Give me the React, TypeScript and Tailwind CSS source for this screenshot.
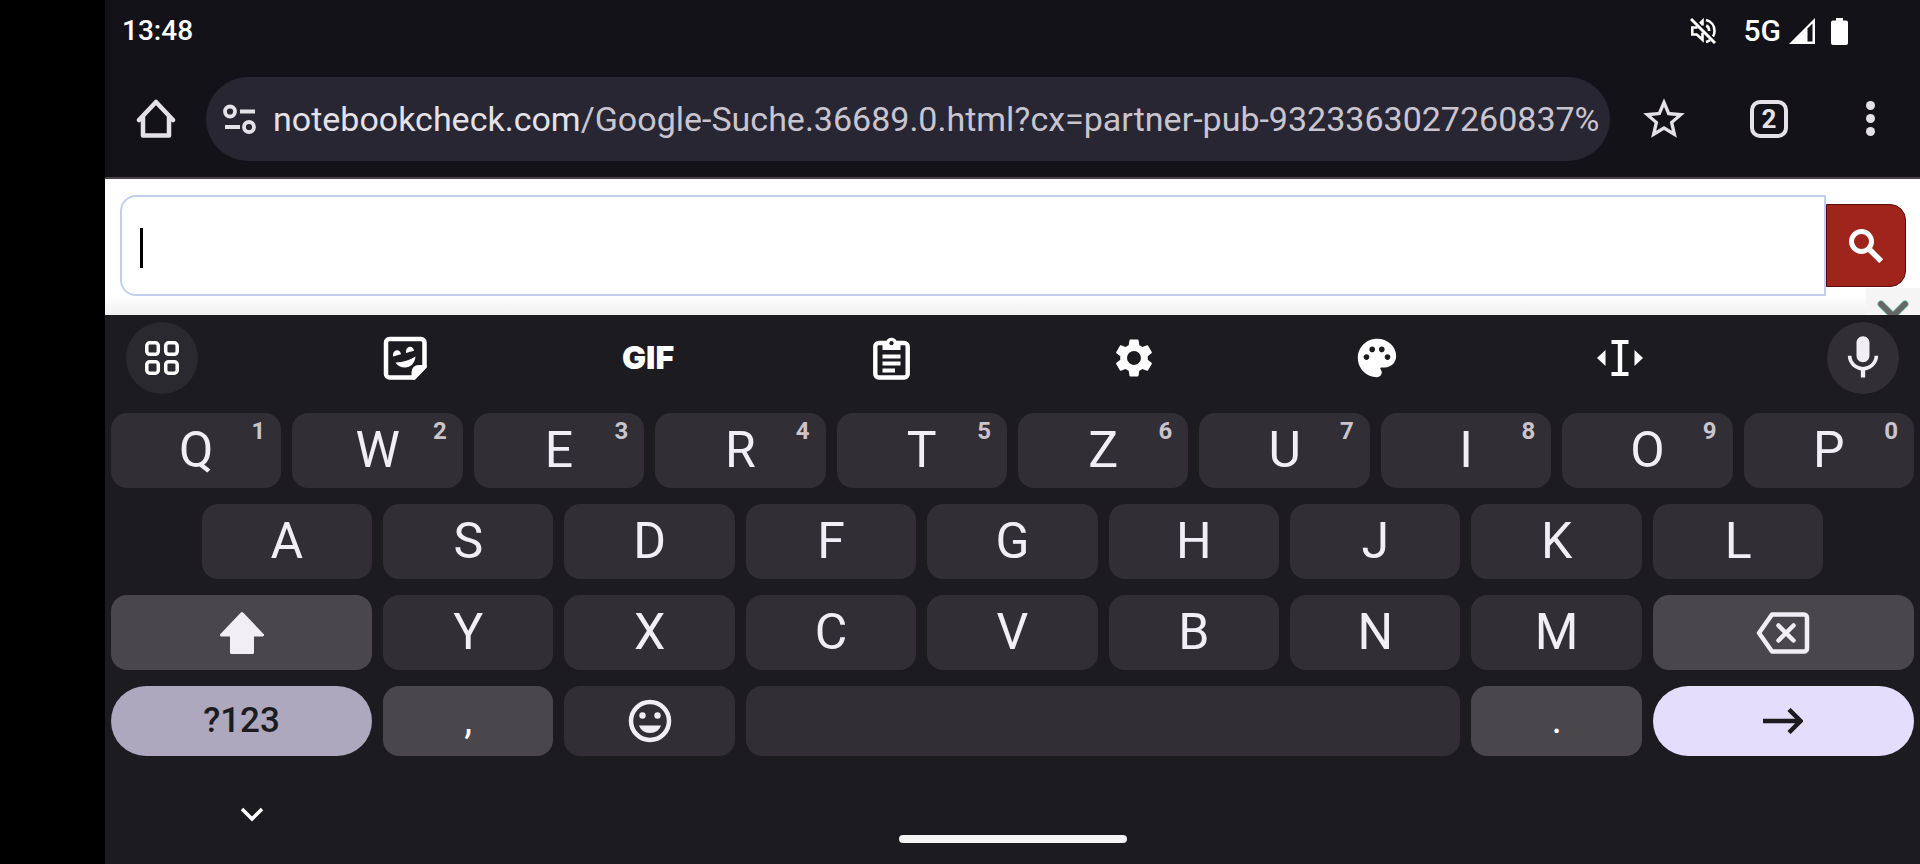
import React from 'react';
import { MdSettings, MdPalette, MdStarOutline, MdMic } from 'react-icons/md';

interface KeyProps {
  label: React.ReactNode;
  name?: string;
  hint?: string;
  span?: string;
  look?: string;
}

const numberRow = ['Q', 'W', 'E', 'R', 'T', 'Z', 'U', 'I', 'O', 'P'];
const homeRow = ['A', 'S', 'D', 'F', 'G', 'H', 'J', 'K', 'L'];
const bottomRow = ['Y', 'X', 'C', 'V', 'B', 'N', 'M'];

const LETTER = 'h-[75px] rounded-2xl bg-[#312e35] pb-0.5 text-[50px] text-[#f2eef6]';
const ACTION = 'h-[75px] rounded-2xl bg-[#49464c] text-[#f2eef6]';
const PUNCTUATION = 'h-[70px] rounded-2xl bg-[#49464c] pb-0.5 text-[40px] text-white';

const Key: React.FC<KeyProps> = ({ label, name, hint, span = 'col-span-2', look = LETTER }) => (
  <div className={`${span} pl-1.5 pr-[5px]`}>
    <button
      type="button"
      aria-label={name}
      className={`relative flex w-full items-center justify-center leading-none ${look}`}
    >
      {label}
      {hint && (
        <span className="absolute right-4 top-1.5 text-2xl leading-none font-bold text-[#c9c5cd]">{hint}</span>
      )}
    </button>
  </div>
);

const HomeIcon = () => (
  <svg width="40" height="40" viewBox="0 0 40 40" fill="none" stroke="#e5e1e9" strokeWidth="4.500" strokeLinejoin="round" strokeLinecap="round">
    <path d="M3 21 20 3l17 18" />
    <path d="M7 18v18.500h26V18" />
  </svg>
);

const TuneIcon = () => (
  <svg width="34" height="30" viewBox="0 0 34 30" fill="none" stroke="#e5e1e9" strokeWidth="3.800">
    <circle cx="7" cy="7.500" r="5" />
    <path d="M17 7.500h15M2 23h15" />
    <circle cx="26" cy="23" r="5" />
  </svg>
);

const MutedIcon = () => (
  <svg width="26" height="26" viewBox="0 0 26 26" fill="none" stroke="#fff" strokeWidth="2.600">
    <path d="M1 1l24 24" strokeWidth="3" />
    <path d="M7.500 9.500H2.300v7h4.500l5.700 5.300v-7" />
    <path d="M10 5.500l2.500-2.500v4.500" />
    <path d="M16 2c5 1.200 8.500 5.500 8.500 11 0 2-.5 4-1.500 5.500M16.200 7.500c2 1 3 3 3 5.500M16 24c1.500-.4 2.800-1 4-1.800" />
  </svg>
);

const SignalIcon = () => (
  <svg width="26" height="26" viewBox="0 0 26 26">
    <path d="M26 0v26H0z" fill="#fff" />
    <path d="M18.500 10.500l5-5v18h-5z" fill="#131218" />
  </svg>
);

const BatteryIcon = () => (
  <svg width="17" height="27" viewBox="0 0 17 27" fill="#fff">
    <path d="M5 0h7v2.500h3a2 2 0 0 1 2 2V25a2 2 0 0 1-2 2H2a2 2 0 0 1-2-2V4.500a2 2 0 0 1 2-2h3z" />
  </svg>
);

const SearchIcon = () => (
  <svg width="34" height="34" viewBox="0 0 34 34" fill="none" stroke="#fff" strokeWidth="5">
    <circle cx="12.500" cy="12.500" r="10" />
    <path d="M20 20l12.200 12.200" strokeWidth="5.500" />
  </svg>
);

const AppsIcon = () => (
  <svg width="34" height="34" viewBox="0 0 34 34" fill="none" stroke="#fff" strokeWidth="3.500">
    <rect x="1.800" y="1.800" width="11.500" height="11.500" rx="3" />
    <rect x="20.700" y="1.800" width="11.500" height="11.500" rx="3" />
    <rect x="1.800" y="20.700" width="11.500" height="11.500" rx="3" />
    <rect x="20.700" y="20.700" width="11.500" height="11.500" rx="3" />
  </svg>
);

const StickerIcon = () => (
  <svg width="44" height="44" viewBox="0 0 44 44">
    <path d="M6.500 3H38a3.500 3.500 0 0 1 3.500 3.500v24L31 41.500H6.500A3.500 3.500 0 0 1 3 38V6.500A3.500 3.500 0 0 1 6.500 3z" fill="none" stroke="#fff" strokeWidth="4.500" />
    <path d="M43.500 29v2L32 43.500h-3.500V36a7 7 0 0 1 7-7z" fill="#fff" />
    <path d="M10 20.500c-.3-3.500 1.200-6 4-6.200 2.400 0 3.700 1.700 4 4zM23 17c-.3-3.500 1.200-6 4-6.200 2.400 0 3.700 1.700 4 4z" fill="#fff" />
    <path d="M12.500 26.500c8-.3 14-2.200 20-6-.5 6.500-4.800 11-10.500 11-4.200 0-7.500-1.800-9.500-5z" fill="#fff" />
  </svg>
);

const ClipboardIcon = () => (
  <svg width="37" height="44" viewBox="0 0 37 44">
    <rect x="2.300" y="7" width="32.400" height="34.500" rx="3.500" fill="none" stroke="#fff" strokeWidth="4.400" />
    <path d="M9.500 5.500h3.800a5.500 5.500 0 0 1 10.400 0h3.800v8.500h-18z" fill="#fff" />
    <circle cx="18.500" cy="7.200" r="2.100" fill="#1c1b20" />
    <path d="M9.500 20.500h18M9.500 27.500h18M9.500 34.500h12.500" stroke="#fff" strokeWidth="4" />
  </svg>
);

const CursorIcon = () => (
  <svg width="46" height="36" viewBox="0 0 46 36" fill="#fff">
    <path d="M0 18l8.500-8v16zM46 18l-8.500-8v16z" />
    <path d="M14.500 0h17v4h-6.300v28h6.300v4h-17v-4h6.300V4h-6.300z" />
  </svg>
);

const ShiftIcon = () => (
  <svg width="46" height="44" viewBox="0 0 46 44">
    <path d="M23 2.500 43.500 24H33.500v17.500h-21V24H2.500z" fill="currentColor" stroke="currentColor" strokeWidth="3" strokeLinejoin="round" />
  </svg>
);

const BackspaceIcon = () => (
  <svg width="54" height="44" viewBox="0 0 54 44" fill="none" stroke="currentColor" strokeWidth="4.500" strokeLinejoin="round" strokeLinecap="round">
    <path d="M16 3.500h32a3 3 0 0 1 3 3v31a3 3 0 0 1-3 3H16L3 22z" />
    <path d="M22.500 14.500l15 15M37.500 14.500l-15 15" />
  </svg>
);

const SmileyIcon = () => (
  <svg width="44" height="44" viewBox="0 0 44 44">
    <circle cx="22" cy="22" r="19" fill="none" stroke="#f2eef6" strokeWidth="4.500" />
    <circle cx="14.500" cy="16.500" r="3.200" fill="#f2eef6" />
    <circle cx="29.500" cy="16.500" r="3.200" fill="#f2eef6" />
    <path d="M11 26.500h22c-1.500 4.500-5.500 7.500-11 7.500s-9.500-3-11-7.500z" fill="#f2eef6" />
  </svg>
);

const EnterIcon = () => (
  <svg width="40" height="26" viewBox="0 0 40 26" fill="none" stroke="#1c1b1f" strokeWidth="4.500">
    <path d="M0 13h36M26 1.500 37.500 13 26 24.500" />
  </svg>
);

const tools = [
  { name: 'Toolbar features', icon: <AppsIcon />, look: 'bg-[#2a292f]' },
  { name: 'Stickers', icon: <StickerIcon /> },
  { name: 'GIF', icon: <span className="font-[Inter] text-[32px] leading-none font-black">GIF</span> },
  { name: 'Clipboard', icon: <ClipboardIcon /> },
  { name: 'Settings', icon: <MdSettings size={46} /> },
  { name: 'Theme', icon: <MdPalette size={46} /> },
  { name: 'Text editing', icon: <CursorIcon /> },
  { name: 'Voice input', icon: <MdMic size={52} color="#f2eef6" />, look: 'bg-[#312e35]' },
];

const StatusBar = () => (
  <div className="flex h-[60px] items-center justify-between pt-0.5 pl-[17px] pr-[72px] text-[28px] font-medium text-white">
    <span>13:48</span>
    <div className="flex items-center">
      <MutedIcon />
      <span className="ml-7 mr-2 text-[30px] leading-none">5G</span>
      <SignalIcon />
      <span className="ml-4">
        <BatteryIcon />
      </span>
    </div>
  </div>
);

const BrowserBar = () => (
  <div className="flex h-[119px] items-center border-b-2 border-[#4a4349] pl-[31px] pr-9">
    <button type="button" aria-label="Home">
      <HomeIcon />
    </button>
    <div className="ml-[30px] flex h-[84px] min-w-0 flex-1 items-center gap-4 rounded-full bg-[#282632] pl-[17px] pr-2 text-[34px]">
      <button type="button" aria-label="Site information" className="shrink-0">
        <TuneIcon />
      </button>
      <a href="#page" className="min-w-0 flex-1 overflow-hidden pt-0.5 whitespace-nowrap text-[#c8c5d0]">
        <span className="text-[#e5e1e9]">notebookcheck.com</span>/Google-Suche.36689.0.html?cx=partner-pub-9323363027260837%
      </a>
    </div>
    <button type="button" aria-label="Bookmark" className="ml-[29px]">
      <MdStarOutline size={50} color="#e5e1e9" />
    </button>
    <button
      type="button"
      aria-label="Tabs"
      className="ml-[61px] flex size-[38px] items-center justify-center rounded-[10px] border-4 border-[#e5e1e9] text-[26px] leading-none font-bold text-[#e5e1e9]"
    >
      2
    </button>
    <button type="button" aria-label="Menu" className="ml-[68px] flex w-7 flex-col items-center gap-1">
      <span className="size-[9px] rounded-full bg-[#e5e1e9]" />
      <span className="size-[9px] rounded-full bg-[#e5e1e9]" />
      <span className="size-[9px] rounded-full bg-[#e5e1e9]" />
    </button>
  </div>
);

const SearchArea = () => (
  <div id="page" className="relative flex h-[136px] items-start overflow-hidden bg-linear-to-b from-white from-85% to-[#f1f1f1] pt-4 pl-[15px] pr-3.5">
    <label className="flex h-[101px] flex-1 items-center rounded-l-2xl border-2 border-[#c3cfee] bg-white pt-1 pl-[18px]">
      <span className="h-10 w-[3px] bg-black" />
      <input type="text" aria-label="Search" className="h-full flex-1 bg-transparent text-[34px] caret-transparent outline-none" />
    </label>
    <button
      type="button"
      aria-label="Run search"
      className="mt-[9px] flex h-[83px] w-20 items-center justify-center rounded-r-2xl border border-[#5c0a0a] bg-[#9f241b]"
    >
      <SearchIcon />
    </button>
    {/* scroll-down tab that slides under the keyboard */}
    <button type="button" aria-label="Scroll down" className="absolute right-0 bottom-0 flex h-[27px] w-[54px] justify-center bg-[#f5f5f5]">
      <svg width="34" height="27" viewBox="0 0 34 27" fill="none" strokeLinecap="round">
        <path d="M5 16l12 12 12-12" stroke="#6fbfa8" strokeWidth="7" />
        <path d="M5 16l12 12 12-12" stroke="#666" strokeWidth="5.500" />
      </svg>
    </button>
  </div>
);

const Keyboard = () => (
  <div className="flex-1 bg-[#1c1b20]">
    <div className="flex items-center justify-between pt-[7px] px-[21px] text-white">
      {tools.map(tool => (
        <button
          key={tool.name}
          type="button"
          aria-label={tool.name}
          className={`flex size-[72px] items-center justify-center rounded-full ${tool.look ?? ''}`}
        >
          {tool.icon}
        </button>
      ))}
    </div>

    <div className="mt-[19px] grid grid-cols-20 gap-y-4 pr-px">
      {numberRow.map((letter, i) => (
        <Key key={letter} label={letter} hint={String((i + 1) % 10)} />
      ))}

      {homeRow.map((letter, i) => (
        <Key key={letter} label={letter} span={i === 0 ? 'col-start-2 col-span-2' : 'col-span-2'} />
      ))}

      <Key label={<ShiftIcon />} name="Shift" span="col-start-1 col-span-3" look={ACTION} />
      {bottomRow.map(letter => (
        <Key key={letter} label={letter} />
      ))}
      <Key label={<BackspaceIcon />} name="Backspace" span="col-span-3" look={ACTION} />

      <Key label="?123" span="col-span-3" look="h-[70px] rounded-full bg-[#ada8be] pb-0.5 text-[35px] font-medium text-[#1c1b1f]" />
      <Key label="," look={PUNCTUATION} />
      <Key label={<SmileyIcon />} name="Emoji" look="h-[70px] rounded-2xl bg-[#312e35]" />
      <Key label="" name="Space" span="col-span-8" look="h-[70px] rounded-2xl bg-[#312e35]" />
      <Key label="." look={PUNCTUATION} />
      <Key label={<EnterIcon />} name="Enter" span="col-span-3" look="h-[70px] rounded-full bg-[#e4ddfc]" />
    </div>

    <div className="pt-[49px] pl-[134px]">
      <button type="button" aria-label="Hide keyboard" className="block">
        <svg width="26" height="18" viewBox="0 0 26 18" fill="none" stroke="#fff" strokeWidth="3.500">
          <path d="M3 4l10 10L23 4" />
        </svg>
      </button>
    </div>
    <div className="mx-auto mt-3 h-2 w-[228px] rounded-full bg-[#f4f4f4]" />
  </div>
);

const App: React.FC = () => {
  return (
    <div className="flex min-h-screen bg-black font-[Roboto,sans-serif]">
      <div className="w-[105px] shrink-0" />
      <main className="flex min-w-0 flex-1 flex-col bg-[#131218]">
        <StatusBar />
        <BrowserBar />
        <SearchArea />
        <Keyboard />
      </main>
    </div>
  );
};

export default App;
